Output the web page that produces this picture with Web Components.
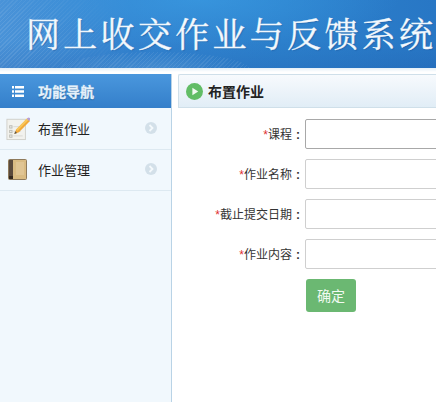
<!DOCTYPE html>
<html lang="zh">
<head>
<meta charset="utf-8">
<title>布置作业</title>
<style>
html, body { margin: 0; height: 100%; overflow: hidden; background: #fff; }
body { font-family: "Liberation Sans", "Noto Sans CJK SC", sans-serif; font-size: 13px; color: #222; }
</style>
</head>
<body>
<app-shell>
	<site-header slot="header">网上收交作业与反馈系统</site-header>
	<side-nav slot="nav" title-text="功能导航">
		<nav-item icon="edit">布置作业</nav-item>
		<nav-item icon="book">作业管理</nav-item>
	</side-nav>
	<main-panel slot="main" title-text="布置作业">
		<form-row label="课程" focused></form-row>
		<form-row label="作业名称"></form-row>
		<form-row label="截止提交日期"></form-row>
		<form-row label="作业内容"></form-row>
		<submit-button>确定</submit-button>
	</main-panel>
</app-shell>
<script>
class AppShell extends HTMLElement {
	constructor() {
		super();
		this.attachShadow({ mode: 'open' })
		this.shadowRoot.innerHTML = `
			<style>
				:host { display: flex; flex-direction: column; height: 402px; width: 436px; overflow: hidden; }
				.body { flex: 1; display: grid; grid-template-columns: 172px 1fr; column-gap: 6px; padding-top: 6px; min-height: 0; background: linear-gradient(#e4eff7, #fff 4px); }
			</style>
			<slot name="header"></slot>
			<div class="body">
				<slot name="nav"></slot>
				<slot name="main"></slot>
			</div>
		`;
	}
}
customElements.define('app-shell', AppShell)

class SiteHeader extends HTMLElement {
	constructor() {
		super();
		this.attachShadow({ mode: 'open' })
		this.shadowRoot.innerHTML = `
			<style>
				:host {
					display: block; position: relative; height: 68px; overflow: hidden; box-sizing: border-box;
					background:
						radial-gradient(ellipse 200px 45px at 200px 0, rgba(60,160,230,.6), transparent 100%),
						linear-gradient(180deg, rgba(0,0,0,0) 60%, rgba(20,60,140,.14) 100%),
						linear-gradient(90deg, #4a93d8 0%, #3384d0 30%, #2c80cc 65%, #2877c5 100%);
					padding: 11px 0 0 26px;
					white-space: nowrap;
				}
				/* hatching at the left and the swoosh along the bottom of the banner */
				:host::before {
					content: ""; position: absolute; left: 0; top: 0; width: 250px; height: 68px;
					background: repeating-linear-gradient(135deg, rgba(255,255,255,.09) 0 1px, transparent 1px 3px);
					-webkit-mask-image: radial-gradient(ellipse 130px 70px at 0 40px, #000 30%, transparent 100%);
					mask-image: radial-gradient(ellipse 130px 70px at 0 40px, #000 30%, transparent 100%);
				}
				:host::after {
					content: ""; position: absolute; left: 60px; top: 52px; width: 190px; height: 36px; border-radius: 50%;
					background: repeating-linear-gradient(135deg, rgba(255,255,255,.08) 0 1px, transparent 1px 3px), radial-gradient(closest-side, rgba(150,205,245,.25), transparent);
				}
				h1 {
					position: relative; z-index: 1; margin: 0; font: 400 34px/44px "Noto Serif CJK SC", "Noto Sans CJK SC", serif;
					letter-spacing: 3.3px; color: #f4f9fd;
					-webkit-text-stroke: .35px #eef6fc;
					text-shadow: 1px 1px 1px rgba(20,70,130,.35);
				}
			</style>
			<h1><slot></slot></h1>
		`;
	}
}
customElements.define('site-header', SiteHeader)

class SideNav extends HTMLElement {
	constructor() {
		super();
		this.attachShadow({ mode: 'open' })
		this.shadowRoot.innerHTML = `
			<style>
				:host { display: flex; flex-direction: column; box-sizing: border-box; background: #f1f8fd; border-right: 1px solid #b9d3e6; min-height: 0; }
				.head {
					height: 34px; display: flex; align-items: center; gap: 14px; padding-left: 12px;
					background: linear-gradient(#4a97dd, #347fca); color: #e8f3fc;
					font: bold 14px "Noto Sans CJK SC", sans-serif;
					-webkit-text-stroke: .3px #dcebf8;
					text-shadow: 0 1px 1px rgba(10,50,100,.5);
				}
				.items { padding-top: 1px; }
				svg { display: block; }
			</style>
			<div class="head">
				<svg width="12" height="11" viewBox="0 0 12 11" fill="#fff">
					<rect x="0" y="0" width="2" height="2.500"/><rect x="3" y="0" width="9" height="2.500"/>
					<rect x="0" y="4.250" width="2" height="2.500"/><rect x="3" y="4.250" width="9" height="2.500"/>
					<rect x="0" y="8.500" width="2" height="2.500"/><rect x="3" y="8.500" width="9" height="2.500"/>
				</svg>
				<span>${this.getAttribute('title-text')}</span>
			</div>
			<div class="items"><slot></slot></div>
		`;
	}
}
customElements.define('side-nav', SideNav)

const NAV_ICONS = {
	edit: `<svg width="24" height="25" viewBox="0 0 26 26">
		<rect x="1" y="3" width="20" height="22" fill="#f2f2ee" stroke="#cfcfc9"/>
		<g fill="none" stroke="#b9b9b2"><rect x="4" y="10" width="2.5" height="2.5"/><rect x="4" y="15" width="2.5" height="2.5"/><rect x="4" y="20" width="2.5" height="2.5"/></g>
		<path d="M8 11h9M8 16h8M8 21h10" stroke="#d8d8d2"/>
		<path d="M9 19l2-5L23 2l3 3-12 12z" fill="#f2a93a"/>
		<path d="M11 14L23 2l1.5 1.5L12.5 15.5z" fill="#f8c85c"/>
		<path d="M9 19l1-3 2 2z" fill="#57524a"/>
		<path d="M22.500 2.500l1.500-1.500 2 .5.5 2-1.500 1.500z" fill="#b5a0d8"/>
	</svg>`,
	book: `<svg width="19" height="21" viewBox="0 0 19 21">
		<rect x="0.500" y="0.500" width="18" height="20" rx="1" fill="#d9bb83" stroke="#8e7a5c"/>
		<rect x="1" y="1" width="4" height="19" fill="#5a4a3c"/>
		<rect x="8" y="3" width="8" height="13" fill="#e0c594"/>
		<rect x="1" y="17" width="4" height="3" fill="#34291f"/>
	</svg>`
}

class NavItem extends HTMLElement {
	constructor() {
		super();
		this.attachShadow({ mode: 'open' })
		const icon = NAV_ICONS[this.getAttribute('icon')]
		this.shadowRoot.innerHTML = `
			<style>
				:host { display: grid; grid-template-columns: 38px 1fr 26px; align-items: center; height: 41px; padding-bottom: 2px; box-sizing: border-box; border-bottom: 1px solid #dde9f1; color: #222; font-size: 13px; }
				.icon { display: flex; justify-content: center; height: 26px; align-items: center; padding-right: 3px; }
				svg { display: block; }
				.go { width: 12px; height: 12px; }
			</style>
			<span class="icon">${icon}</span>
			<span><slot></slot></span>
			<svg class="go" viewBox="0 0 12 12">
				<circle cx="6" cy="6" r="6" fill="#d3e0e9"/>
				<path d="M4.500 3l3 3-3 3" fill="none" stroke="#f4f9fc" stroke-width="1.800"/>
			</svg>
		`;
	}
}
customElements.define('nav-item', NavItem)

class MainPanel extends HTMLElement {
	constructor() {
		super();
		this.attachShadow({ mode: 'open' })
		this.shadowRoot.innerHTML = `
			<style>
				:host { display: block; min-width: 0; overflow: hidden; }
				.head {
					height: 34px; box-sizing: border-box; display: flex; align-items: center; gap: 5px; padding-left: 7px;
					background: linear-gradient(#f7fafd, #e1edf6);
					border: 1px solid #cfdfe9; border-right: 0; border-radius: 2px 0 0 0;
					font: bold 14px "Noto Sans CJK SC", sans-serif; color: #222;
				}
				svg { display: block; }
				.form { display: flex; flex-direction: column; gap: 10px; padding-top: 11px; }
			</style>
			<div class="head">
				<svg width="17" height="17" viewBox="0 0 16 16">
					<circle cx="8" cy="8" r="8" fill="#62bd66"/>
					<path d="M6 4.500v7l5.500-3.500z" fill="#f2faf2"/>
				</svg>
				<span>${this.getAttribute('title-text')}</span>
			</div>
			<div class="form"><slot></slot></div>
		`;
	}
}
customElements.define('main-panel', MainPanel)

class FormRow extends HTMLElement {
	constructor() {
		super();
		this.attachShadow({ mode: 'open' })
		const border = this.hasAttribute('focused') ? '#a8a8a8' : '#cfcfcf'
		this.shadowRoot.innerHTML = `
			<style>
				:host { display: grid; grid-template-columns: 127px 1fr; align-items: center; height: 30px; color: #333; font-size: 12px; }
				label { text-align: right; white-space: nowrap; padding: 0 5px 2px 0; }
				i { color: #e03030; font-style: normal; }
				b { margin-left: 4px; }
				input { box-sizing: border-box; width: 260px; height: 30px; margin: 0; padding: 0 6px; background: #fff; border: 1px solid ${border}; border-radius: 2px; outline: 0; }
			</style>
			<label><i>*</i>${this.getAttribute('label')}<b>:</b></label>
			<input type="text">
		`;
	}
}
customElements.define('form-row', FormRow)

class SubmitButton extends HTMLElement {
	constructor() {
		super();
		this.attachShadow({ mode: 'open' })
		this.shadowRoot.innerHTML = `
			<style>
				:host { display: block; padding-left: 128px; }
				button { display: block; width: 50px; height: 33px; padding: 0 0 2px; border: 0; border-radius: 3px; background: #6bb872; color: #f2faf2; font: 14px "Noto Sans CJK SC", sans-serif; }
			</style>
			<button type="button"><slot></slot></button>
		`;
	}
}
customElements.define('submit-button', SubmitButton)
</script>
</body>
</html>
